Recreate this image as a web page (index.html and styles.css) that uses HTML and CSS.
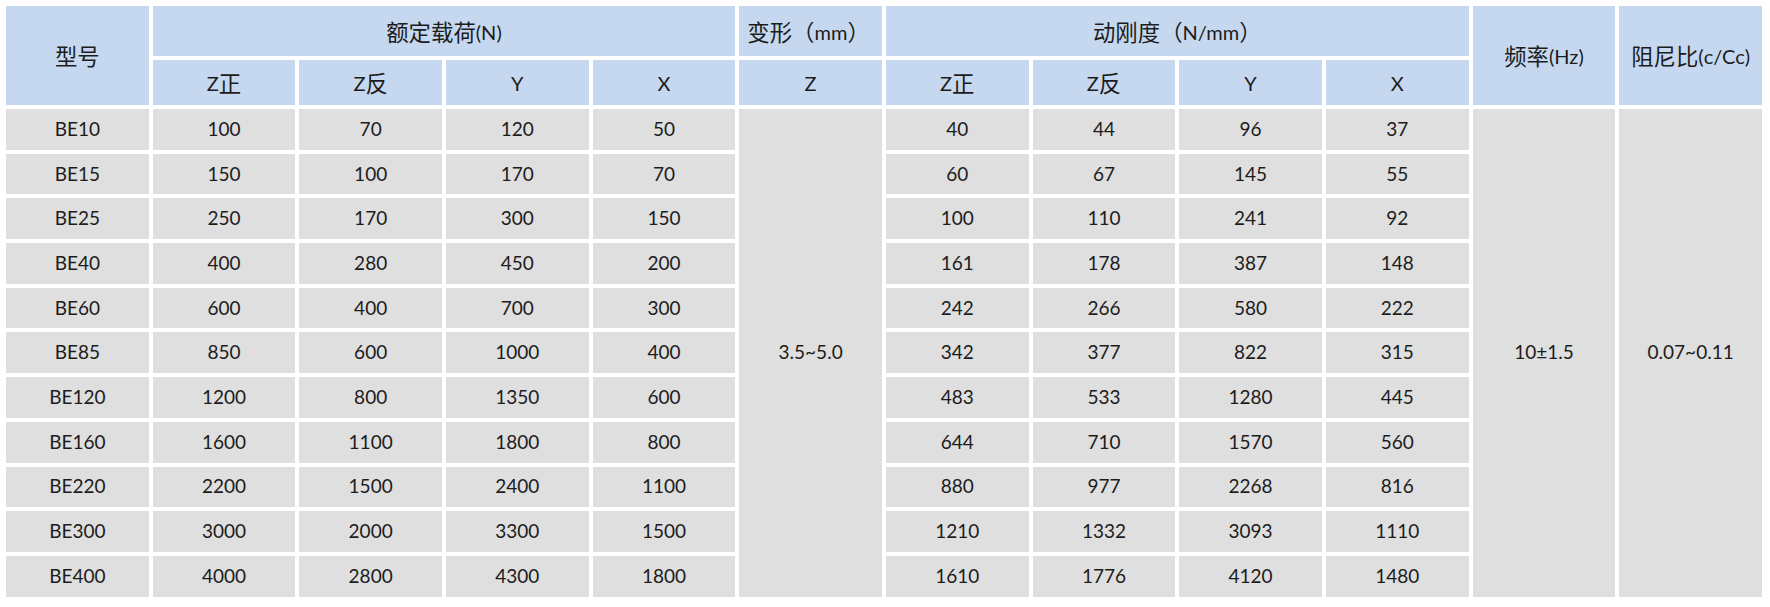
FILE: index.html
```html
<!DOCTYPE html>
<html lang="zh-CN">
<head>
<meta charset="utf-8">
<title>参数表</title>
<link rel="stylesheet" href="styles.css">
</head>
<body>
<table class="spec">
  <colgroup>
    <col class="c"><col class="c"><col class="c"><col class="c"><col class="c"><col class="c">
    <col class="c"><col class="c"><col class="c"><col class="c"><col class="c"><col class="c">
  </colgroup>
  <thead>
    <tr class="h1">
      <th rowspan="2"><span class="zh">型号</span></th>
      <th colspan="4"><span class="zh">额定载荷</span>(N)</th>
      <th class="left"><span class="zh">变形（</span>mm<span class="zh">）</span></th>
      <th colspan="4"><span class="zh">动刚度（</span>N/mm<span class="zh">）</span></th>
      <th rowspan="2"><span class="zh">频率</span>(Hz)</th>
      <th rowspan="2"><span class="zh">阻尼比</span>(c/Cc)</th>
    </tr>
    <tr class="h2">
      <th>Z<span class="zh">正</span></th><th>Z<span class="zh">反</span></th><th>Y</th><th>X</th>
      <th>Z</th>
      <th>Z<span class="zh">正</span></th><th>Z<span class="zh">反</span></th><th>Y</th><th>X</th>
    </tr>
  </thead>
  <tbody>
    <tr><td>BE10</td><td>100</td><td>70</td><td>120</td><td>50</td><td rowspan="11">3.5~5.0</td><td>40</td><td>44</td><td>96</td><td>37</td><td rowspan="11">10±1.5</td><td rowspan="11">0.07~0.11</td></tr>
    <tr><td>BE15</td><td>150</td><td>100</td><td>170</td><td>70</td><td>60</td><td>67</td><td>145</td><td>55</td></tr>
    <tr><td>BE25</td><td>250</td><td>170</td><td>300</td><td>150</td><td>100</td><td>110</td><td>241</td><td>92</td></tr>
    <tr><td>BE40</td><td>400</td><td>280</td><td>450</td><td>200</td><td>161</td><td>178</td><td>387</td><td>148</td></tr>
    <tr><td>BE60</td><td>600</td><td>400</td><td>700</td><td>300</td><td>242</td><td>266</td><td>580</td><td>222</td></tr>
    <tr><td>BE85</td><td>850</td><td>600</td><td>1000</td><td>400</td><td>342</td><td>377</td><td>822</td><td>315</td></tr>
    <tr><td>BE120</td><td>1200</td><td>800</td><td>1350</td><td>600</td><td>483</td><td>533</td><td>1280</td><td>445</td></tr>
    <tr><td>BE160</td><td>1600</td><td>1100</td><td>1800</td><td>800</td><td>644</td><td>710</td><td>1570</td><td>560</td></tr>
    <tr><td>BE220</td><td>2200</td><td>1500</td><td>2400</td><td>1100</td><td>880</td><td>977</td><td>2268</td><td>816</td></tr>
    <tr><td>BE300</td><td>3000</td><td>2000</td><td>3300</td><td>1500</td><td>1210</td><td>1332</td><td>3093</td><td>1110</td></tr>
    <tr><td>BE400</td><td>4000</td><td>2800</td><td>4300</td><td>1800</td><td>1610</td><td>1776</td><td>4120</td><td>1480</td></tr>
  </tbody>
</table>
</body>
</html>
```
FILE: styles.css
```css
html, body {
  margin: 0;
  padding: 0;
  background: #ffffff;
}
body {
  padding: 2px;
  font-family: Lato, "Noto Sans CJK SC", sans-serif;
  font-size: 19px;
  color: #1c1c1c;
}
.spec {
  border-collapse: separate;
  border-spacing: 4px;
  width: 1764px;
  margin: 0;
  table-layout: fixed;
}
.spec col.c {
  width: 142.67px;
}
.spec th,
.spec td {
  padding: 0;
  text-align: center;
  vertical-align: middle;
  font-weight: normal;
  line-height: 1.2;
}
.spec th {
  background: #c6d8f0;
  font-size: 20px;
}
.spec td {
  background: #dfdfdf;
  height: 40.7px;
}
.spec .h1 th {
  height: 50px;
}
.spec .h2 th {
  height: 45px;
}
.spec th.left {
  text-align: left;
  padding-left: 8px;
}
.zh {
  font-family: "Noto Sans CJK SC", sans-serif;
  font-size: 1.12em;
  vertical-align: -0.04em;
}
```
